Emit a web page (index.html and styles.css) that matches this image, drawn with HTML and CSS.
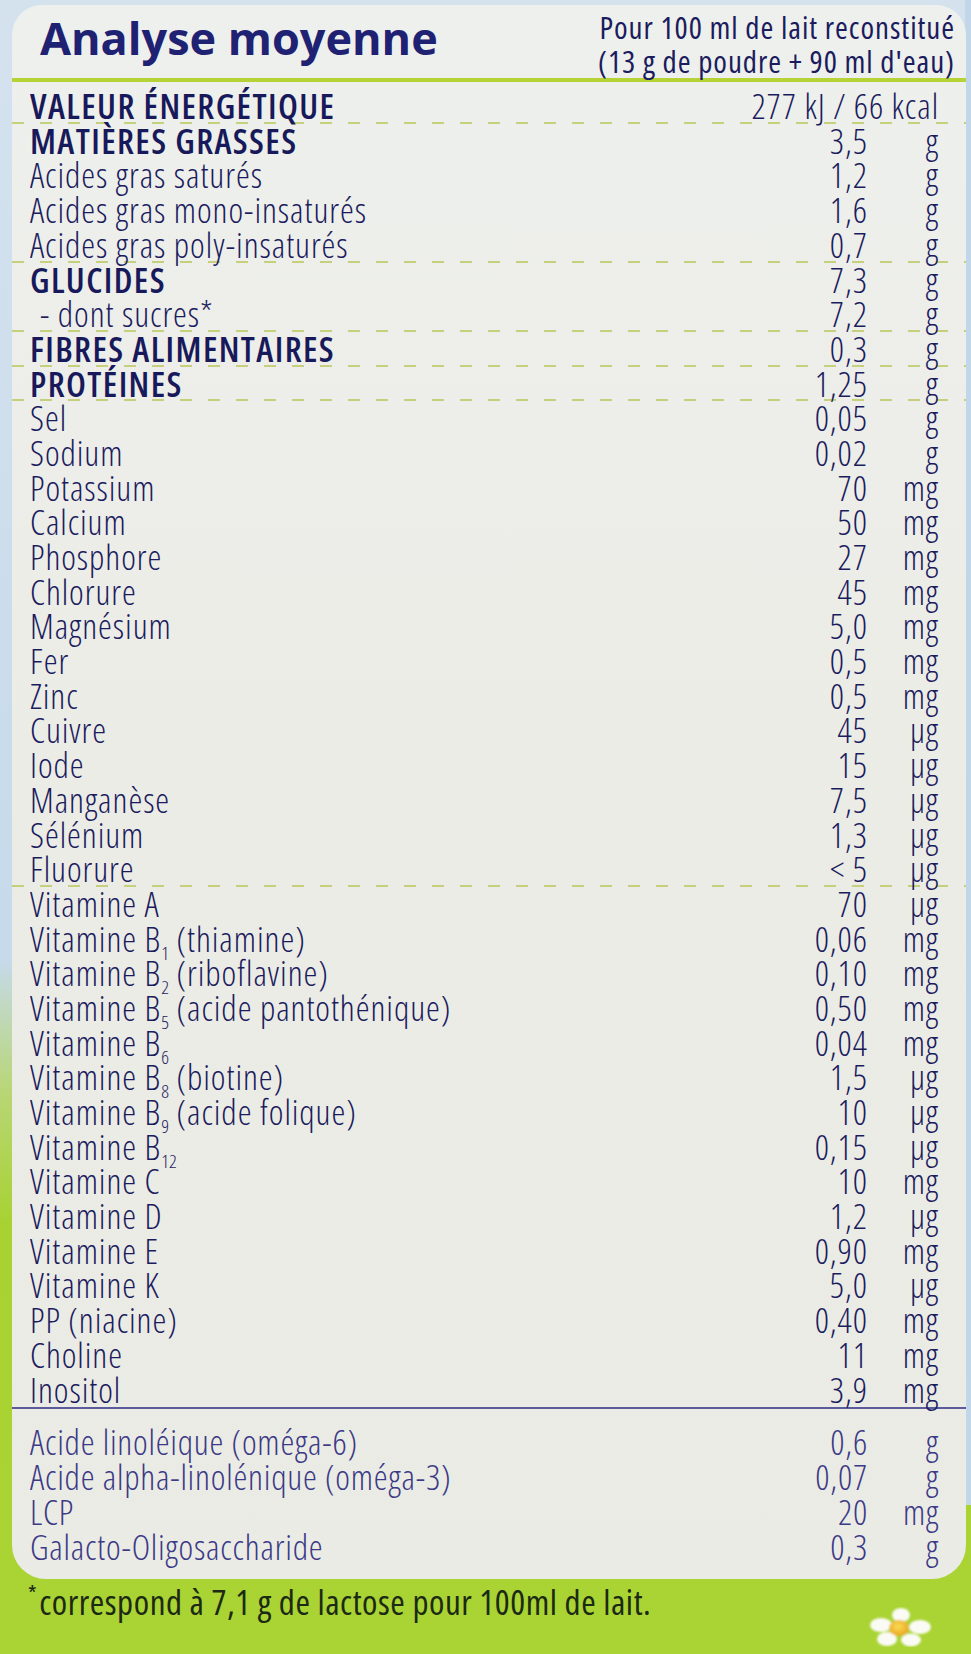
FILE: index.html
```html
<!DOCTYPE html>
<html lang="fr">
<head>
<meta charset="utf-8">
<title>Analyse moyenne</title>
<link rel="stylesheet" href="styles.css">
</head>
<body>
<div class="card">
  <div class="header">
    <h1 class="title">Analyse moyenne</h1>
    <div class="basis">Pour 100 ml de lait reconstitué<br>(13 g de poudre + 90 ml d'eau)</div>
  </div>
  <div class="rows">
    <div class="row bold rule"><span class="label">VALEUR ÉNERGÉTIQUE</span><span class="span2">277 kJ / 66 kcal</span></div>
    <div class="row bold"><span class="label">MATIÈRES GRASSES</span><span class="val">3,5</span><span class="unit">g</span></div>
    <div class="row"><span class="label">Acides gras saturés</span><span class="val">1,2</span><span class="unit">g</span></div>
    <div class="row"><span class="label">Acides gras mono-insaturés</span><span class="val">1,6</span><span class="unit">g</span></div>
    <div class="row rule"><span class="label">Acides gras poly-insaturés</span><span class="val">0,7</span><span class="unit">g</span></div>
    <div class="row bold"><span class="label">GLUCIDES</span><span class="val">7,3</span><span class="unit">g</span></div>
    <div class="row rule"><span class="label indent">- dont sucres*</span><span class="val">7,2</span><span class="unit">g</span></div>
    <div class="row bold rule"><span class="label">FIBRES ALIMENTAIRES</span><span class="val">0,3</span><span class="unit">g</span></div>
    <div class="row bold rule"><span class="label">PROTÉINES</span><span class="val">1,25</span><span class="unit">g</span></div>
    <div class="row"><span class="label">Sel</span><span class="val">0,05</span><span class="unit">g</span></div>
    <div class="row"><span class="label">Sodium</span><span class="val">0,02</span><span class="unit">g</span></div>
    <div class="row"><span class="label">Potassium</span><span class="val">70</span><span class="unit">mg</span></div>
    <div class="row"><span class="label">Calcium</span><span class="val">50</span><span class="unit">mg</span></div>
    <div class="row"><span class="label">Phosphore</span><span class="val">27</span><span class="unit">mg</span></div>
    <div class="row"><span class="label">Chlorure</span><span class="val">45</span><span class="unit">mg</span></div>
    <div class="row"><span class="label">Magnésium</span><span class="val">5,0</span><span class="unit">mg</span></div>
    <div class="row"><span class="label">Fer</span><span class="val">0,5</span><span class="unit">mg</span></div>
    <div class="row"><span class="label">Zinc</span><span class="val">0,5</span><span class="unit">mg</span></div>
    <div class="row"><span class="label">Cuivre</span><span class="val">45</span><span class="unit">µg</span></div>
    <div class="row"><span class="label">Iode</span><span class="val">15</span><span class="unit">µg</span></div>
    <div class="row"><span class="label">Manganèse</span><span class="val">7,5</span><span class="unit">µg</span></div>
    <div class="row"><span class="label">Sélénium</span><span class="val">1,3</span><span class="unit">µg</span></div>
    <div class="row rule"><span class="label">Fluorure</span><span class="val">&lt; 5</span><span class="unit">µg</span></div>
    <div class="row"><span class="label">Vitamine A</span><span class="val">70</span><span class="unit">µg</span></div>
    <div class="row"><span class="label">Vitamine B<sub>1</sub> (thiamine)</span><span class="val">0,06</span><span class="unit">mg</span></div>
    <div class="row"><span class="label">Vitamine B<sub>2</sub> (riboflavine)</span><span class="val">0,10</span><span class="unit">mg</span></div>
    <div class="row"><span class="label">Vitamine B<sub>5</sub> (acide pantothénique)</span><span class="val">0,50</span><span class="unit">mg</span></div>
    <div class="row"><span class="label">Vitamine B<sub>6</sub></span><span class="val">0,04</span><span class="unit">mg</span></div>
    <div class="row"><span class="label">Vitamine B<sub>8</sub> (biotine)</span><span class="val">1,5</span><span class="unit">µg</span></div>
    <div class="row"><span class="label">Vitamine B<sub>9</sub> (acide folique)</span><span class="val">10</span><span class="unit">µg</span></div>
    <div class="row"><span class="label">Vitamine B<sub>12</sub></span><span class="val">0,15</span><span class="unit">µg</span></div>
    <div class="row"><span class="label">Vitamine C</span><span class="val">10</span><span class="unit">mg</span></div>
    <div class="row"><span class="label">Vitamine D</span><span class="val">1,2</span><span class="unit">µg</span></div>
    <div class="row"><span class="label">Vitamine E</span><span class="val">0,90</span><span class="unit">mg</span></div>
    <div class="row"><span class="label">Vitamine K</span><span class="val">5,0</span><span class="unit">µg</span></div>
    <div class="row"><span class="label">PP (niacine)</span><span class="val">0,40</span><span class="unit">mg</span></div>
    <div class="row"><span class="label">Choline</span><span class="val">11</span><span class="unit">mg</span></div>
    <div class="row"><span class="label">Inositol</span><span class="val">3,9</span><span class="unit">mg</span></div>
  </div>
  <div class="rows extra">
    <div class="row"><span class="label">Acide linoléique (oméga-6)</span><span class="val">0,6</span><span class="unit">g</span></div>
    <div class="row"><span class="label">Acide alpha-linolénique (oméga-3)</span><span class="val">0,07</span><span class="unit">g</span></div>
    <div class="row"><span class="label">LCP</span><span class="val">20</span><span class="unit">mg</span></div>
    <div class="row"><span class="label">Galacto-Oligosaccharide</span><span class="val">0,3</span><span class="unit">g</span></div>
  </div>
</div>
<div class="foot">
  <p class="note"><span class="star">*</span>correspond à 7,1 g de lactose pour 100ml de lait.</p>
  <svg class="daisy" width="64" height="40" viewBox="0 0 64 40" aria-hidden="true">
    <defs>
      <filter id="soft" x="-20%" y="-20%" width="140%" height="140%"><feGaussianBlur stdDeviation="0.9"/></filter>
      <radialGradient id="heart" cx="0.45" cy="0.4" r="0.6">
        <stop offset="0" stop-color="#f8dc58"/>
        <stop offset="1" stop-color="#eea51c"/>
      </radialGradient>
    </defs>
    <g filter="url(#soft)">
      <ellipse cx="33" cy="8" rx="9" ry="7" fill="#fbfbf6"/>
      <ellipse cx="13" cy="18" rx="11" ry="7" fill="#fbfbf6"/>
      <ellipse cx="52" cy="20" rx="11" ry="7" fill="#fbfbf6"/>
      <ellipse cx="19" cy="32" rx="10" ry="7" fill="#fbfbf6"/>
      <ellipse cx="43" cy="33" rx="10" ry="6.5" fill="#fbfbf6"/>
      <ellipse cx="31" cy="21" rx="10" ry="8" fill="url(#heart)"/>
    </g>
  </svg>
</div>
</body>
</html>
```
FILE: styles.css
```css
html, body {
  margin: 0;
  padding: 0;
}

body {
  width: 971px;
  height: 1654px;
  overflow: hidden;
  background:
    linear-gradient(#c2d6ea, #c2d6ea) right top / 6px 91% no-repeat,
    linear-gradient(180deg, #d4e2ee 0%, #c6daeb 58%, #b8d676 66%, #a7d232 74%, #a9d434 100%);
  font-family: "Open Sans", sans-serif;
  font-stretch: 75%;
  color: #1b1c5e;
}

.card {
  margin: 5px 5px 0 12px;
  background: linear-gradient(180deg, #eef0ed 0%, #ececE6 50%, #ebebe5 100%);
  border-radius: 30px 30px 34px 34px;
  padding-bottom: 14.8px;
}

.header {
  display: flex;
  justify-content: space-between;
  align-items: flex-start;
  height: 73px;
  border-bottom: 4px solid #b5d336;
  padding: 0 11px 0 28px;
}

.title {
  margin: 0;
  padding-top: 8px;
  font-stretch: 100%;
  font-weight: 700;
  font-size: 45px;
  line-height: 50px;
  color: #1f2272;
}

.basis {
  padding-top: 4.6px;
  font-weight: 400;
  font-size: 31px;
  line-height: 34px;
  letter-spacing: 0.95px;
  text-align: right;
  color: #1b1c5e;
  white-space: nowrap;
}

.rows {
  padding-top: 7.1px;
}

.row {
  display: grid;
  grid-template-columns: 1fr auto 71px;
  padding: 0 27px 0 18px;
  height: 34.7px;
  font-size: 35px;
  font-weight: 300;
  line-height: 34.7px;
  letter-spacing: 0.95px;
  white-space: nowrap;
}

.row.bold .label {
  font-weight: 600;
  letter-spacing: 1.4px;
  color: #17195a;
}

.row.rule {
  background: repeating-linear-gradient(90deg, #c6d07c 0 12px, transparent 12px 28px) left 0 bottom 0 / 100% 2px no-repeat;
}

.label.indent {
  padding-left: 10px;
}

.val,
.unit,
.span2 {
  text-align: right;
}

.span2 {
  grid-column: 2 / 4;
}

sub {
  font-size: 19px;
  line-height: 0;
  letter-spacing: 0;
  vertical-align: -8px;
}

.rows.extra {
  border-top: 2px solid #5a5a9c;
  padding-top: 15.1px;
}

.rows.extra .row {
  height: 35px;
  line-height: 35px;
  letter-spacing: 0.8px;
  color: #3b3a86;
}

.foot {
  display: flex;
  justify-content: space-between;
  align-items: flex-start;
  padding: 2.6px 39px 0 28px;
}

.note {
  margin: 0;
  font-weight: 400;
  font-size: 35px;
  line-height: 40px;
  letter-spacing: 0.55px;
  color: #1c2a14;
  white-space: nowrap;
}

.star {
  display: inline-block;
  font-size: 22px;
  line-height: 0;
  vertical-align: 14px;
  margin-right: 2px;
}

.daisy {
  display: block;
  margin-top: 25px;
}
```
